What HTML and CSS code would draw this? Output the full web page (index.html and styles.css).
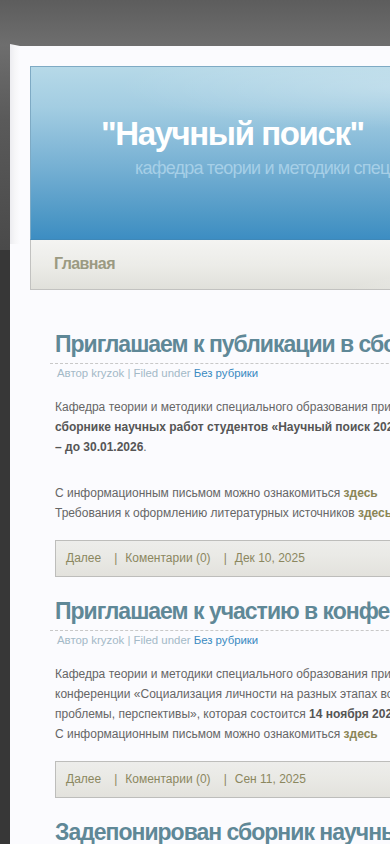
FILE: index.html
```html
<!DOCTYPE html>
<html lang="ru">
<head>
  <meta charset="UTF-8">
  <title>"Научный поиск"</title>
  <link rel="stylesheet" href="styles.css">
</head>
<body>
  <div class="wrap">
    <div class="curl"></div>
    <div class="page">
      <div class="header">
        <h1 class="site-title">"Научный поиск"</h1>
        <div class="site-desc">кафедра теории и методики специального образования</div>
      </div>
      <div class="menu">
        <a href="#" class="menu-link">Главная</a>
      </div>

      <div class="content">
        <div class="post">
          <h2 class="post-title"><a href="#">Приглашаем к публикации в сборнике научных работ студентов</a></h2>
          <div class="post-meta">Автор kryzok | Filed under <a href="#">Без рубрики</a></div>
          <div class="post-body">
            <p>Кафедра теории и методики специального образования приглашает студентов к публикации в<br>
            <b>сборнике научных работ студентов «Научный поиск 2026». Приём материалов</b><br>
            <b>– до 30.01.2026</b>.</p>
            <p>&nbsp;</p>
            <p>С информационным письмом можно ознакомиться <a href="#">здесь</a><br>
            Требования к оформлению литературных источников <a href="#">здесь</a></p>
          </div>
          <div class="post-foot">
            <a href="#">Далее</a><span class="sep">|</span><a href="#">Коментарии (0)</a><span class="sep">|</span><span>Дек 10, 2025</span>
          </div>
        </div>

        <div class="post">
          <h2 class="post-title"><a href="#">Приглашаем к участию в конференции</a></h2>
          <div class="post-meta">Автор kryzok | Filed under <a href="#">Без рубрики</a></div>
          <div class="post-body">
            <p>Кафедра теории и методики специального образования приглашает к участию в работе<br>
            конференции «Социализация личности на разных этапах возрастного развития: опыт,<br>
            проблемы, перспективы», которая состоится <b>14 ноября 2025 года</b>.<br>
            С информационным письмом можно ознакомиться <a href="#">здесь</a></p>
          </div>
          <div class="post-foot">
            <a href="#">Далее</a><span class="sep">|</span><a href="#">Коментарии (0)</a><span class="sep">|</span><span>Сен 11, 2025</span>
          </div>
        </div>

        <div class="post">
          <h2 class="post-title"><a href="#">Задепонирован сборник научных работ студентов</a></h2>
        </div>
      </div>
    </div>
  </div>
</body>
</html>
```

FILE: styles.css
```css
/* Общие стили */
html, body {
  overflow-x: hidden;
}

body {
  margin: 0;
  padding: 0;
  background: #373737 linear-gradient(#5d5d5d 0, #6e6e6e 45px, #5a5a5a 120px, #4a4a4a 250px) no-repeat;
  background-size: 100% 250px;
  font-family: "Liberation Sans", Arial, sans-serif;
  min-height: 100vh;
}

.wrap {
  position: relative;
  width: 960px;
  padding: 46px 0 0 10px;
}

/* загнутый край страницы */
.curl {
  position: absolute;
  left: 3px;
  top: 44px;
  width: 17px;
  height: 200px;
  background: linear-gradient(90deg, rgba(0,0,0,0) 0, rgba(0,0,0,0.12) 6px, #ececf0 7px, #f6f6f8 12px, #fbfbfe 17px);
  clip-path: polygon(7px 0, 17px 2px, 17px 100%, 7px 100%);
}

.page {
  background: #fbfbfe;
  padding: 20px;
  min-height: 900px;
}

/* Шапка */
.header {
  height: 174px;
  border: 1px solid #7eaac4;
  border-bottom-color: #3f88b8;
  background:
    radial-gradient(ellipse 420px 60px at 380px 20px, rgba(255,255,255,0.25), rgba(255,255,255,0) 70%),
    linear-gradient(#b6d9e8 0, #a3cde2 40px, #76b0d3 100px, #4e98c6 150px, #3b8cc2 174px);
  box-sizing: border-box;
}

.site-title {
  margin: 0;
  padding: 47px 0 0 70px;
  font-size: 33px;
  line-height: 40px;
  font-weight: bold;
  letter-spacing: -1.4px;
  color: #fff;
  white-space: nowrap;
}

.site-desc {
  padding: 2px 0 0 104px;
  font-size: 18px;
  line-height: 24px;
  letter-spacing: -0.8px;
  color: #a6cfe7;
  white-space: nowrap;
}

/* Меню */
.menu {
  height: 50px;
  border: 1px solid #c2c2c0;
  border-top: none;
  background:
    radial-gradient(ellipse 300px 40px at 520px 55px, rgba(255,255,255,0.6), rgba(255,255,255,0) 70%),
    linear-gradient(#f4f4f2 0, #ecece8 25px, #e0e0da 50px);
  box-sizing: border-box;
  padding: 0 0 0 23px;
}

.menu-link {
  display: inline-block;
  line-height: 48px;
  font-size: 16px;
  font-weight: bold;
  letter-spacing: -0.6px;
  color: #9b9a82;
  text-decoration: none;
}

/* Записи */
.content {
  padding: 40px 0 0 20px;
}

.post {
  margin-bottom: 20px;
}

.post-title {
  margin: 0;
  padding: 0 0 5px 5px;
  border-bottom: 1px dashed #c8c8c8;
  font-size: 23px;
  line-height: 28px;
  font-weight: bold;
  letter-spacing: -1px;
  white-space: nowrap;
}

.post-title a {
  color: #5f8897;
  text-decoration: none;
}

.post-meta {
  padding: 1px 0 0 7px;
  font-size: 11.4px;
  line-height: 16px;
  color: #a3b9c7;
  white-space: nowrap;
}

.post-meta a {
  color: #3a8ac1;
  text-decoration: none;
}

.post-body {
  padding: 16px 0 0 5px;
  font-size: 12px;
  line-height: 20px;
  color: #666;
  white-space: nowrap;
}

.post-body p {
  margin: 0 0 3px;
}

.post-body b {
  color: #555;
}

.post-body a {
  color: #8a8556;
  font-weight: bold;
  text-decoration: none;
}

.post-foot {
  margin: 17px 0 0 5px;
  height: 37px;
  border: 1px solid #bdbdbb;
  background: linear-gradient(#ededeb 0, #eaeae6 14px, #e2e1dc 37px);
  box-sizing: border-box;
  padding: 0 0 0 10px;
  line-height: 35px;
  font-size: 12px;
  color: #8b875f;
  white-space: nowrap;
}

.post-foot a {
  color: #8b875f;
  text-decoration: none;
}

.post-foot .sep {
  padding: 0 8px 0 13px;
}
```
